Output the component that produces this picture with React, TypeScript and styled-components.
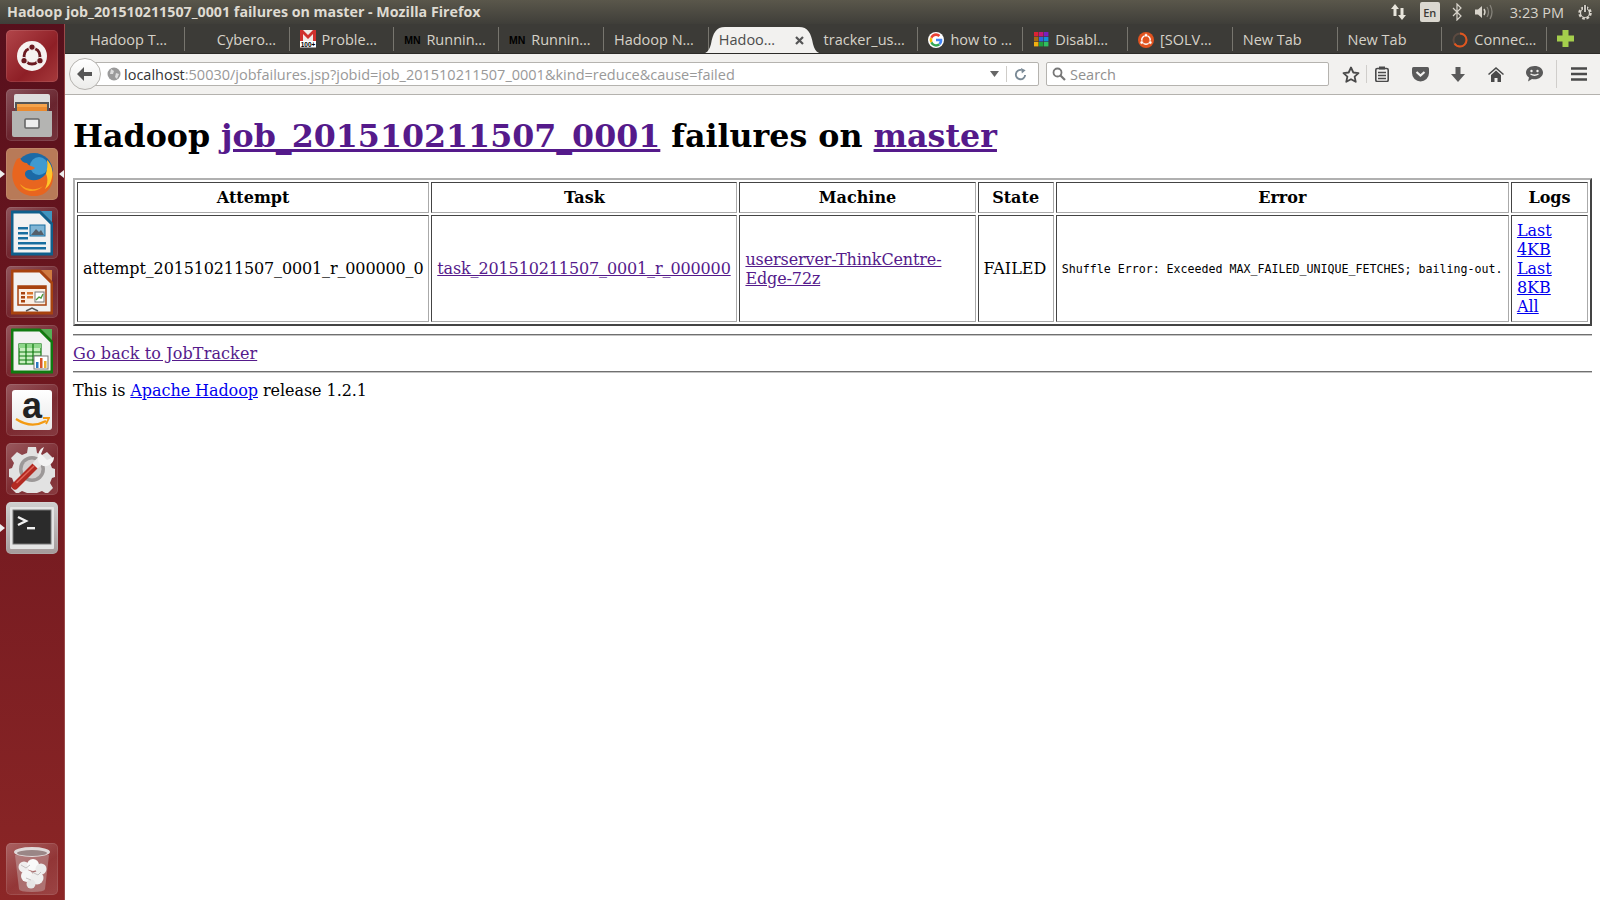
import React from 'react'
import styled, { createGlobalStyle } from 'styled-components'

const GlobalStyle = createGlobalStyle`
  html, body { margin: 0; padding: 0; height: 100%; overflow: hidden; background: #fff; }
  #root { height: 100%; }
`

const Desktop = styled.div`
  width: 1600px;
  height: 900px;
  display: flex;
  flex-direction: column;
  overflow: hidden;
  font-family: "Open Sans", "Noto Sans", sans-serif;
`

const PanelBar = styled.div`
  height: 24px;
  flex: none;
  box-sizing: border-box;
  display: flex;
  align-items: center;
  justify-content: space-between;
  padding: 0 6px 0 7px;
  background: linear-gradient(#5a574b, #3f3e39);
  color: #dfdbd2;
`

const WindowTitle = styled.div`
  font-size: 14.25px;
  font-weight: 700;
  white-space: nowrap;
  padding-bottom: 2px;
`

const Indicators = styled.div`
  display: flex;
  align-items: center;
  gap: 12px;
`

const LangBadge = styled.div`
  width: 20px;
  height: 20px;
  border-radius: 2px;
  background: #dbd8d0;
  color: #3c3b37;
  font-size: 11px;
  font-weight: 600;
  display: flex;
  align-items: center;
  justify-content: center;
`

const Clock = styled.div`
  font-size: 14.5px;
  color: #d8d4cb;
  margin-left: 4px;
`

const Body = styled.div`
  flex: 1;
  display: flex;
  min-height: 0;
`

const Launcher = styled.nav`
  width: 65px;
  flex: none;
  box-sizing: border-box;
  padding: 6px 6px 5px;
  display: flex;
  flex-direction: column;
  justify-content: space-between;
  background: linear-gradient(#57101c, #6e171f 40%, #8b2626);
  border-right: 1px solid #9a4a4a;
  position: relative;
`

const LauncherGroup = styled.div`
  display: flex;
  flex-direction: column;
  gap: 7px;
`

const Tile = styled.div<{ $bg?: string }>`
  width: 52px;
  height: 52px;
  border-radius: 5px;
  position: relative;
  background: ${p => p.$bg || 'linear-gradient(145deg, rgba(255,255,255,.28), rgba(255,255,255,.08) 55%, rgba(255,255,255,.14))'};
  box-shadow: inset 0 0 0 1px rgba(255,255,255,.1);
  display: flex;
  align-items: center;
  justify-content: center;
`

const Pip = styled.div<{ $side: 'left' | 'right' }>`
  position: absolute;
  top: 50%;
  margin-top: -4px;
  width: 0;
  height: 0;
  border-top: 4px solid transparent;
  border-bottom: 4px solid transparent;
  ${p => p.$side === 'left'
    ? 'left: -6px; border-left: 5px solid #eee;'
    : 'right: -6px; border-right: 5px solid #eee;'}
`

const AmazonCard = styled.div`
  width: 40px;
  height: 40px;
  border-radius: 3px;
  background: linear-gradient(#fff, #e8e8e8);
  position: relative;
  text-align: center;
  font-family: "Liberation Sans", sans-serif;
  font-size: 36px;
  font-weight: 700;
  line-height: 31px;
  color: #222;
`

const AmazonSmile = styled.svg`
  position: absolute;
  left: 2px;
  bottom: 2px;
`

const Browser = styled.div`
  flex: 1;
  min-width: 0;
  display: flex;
  flex-direction: column;
`

const TabStrip = styled.div`
  height: 30px;
  flex: none;
  display: flex;
  align-items: center;
  padding-left: 15px;
  background: #3c3b37;
  border-bottom: 1px solid #2c2b28;
  box-sizing: border-box;
  overflow: hidden;
`

const Tab = styled.div<{ $active?: boolean }>`
  width: 104.8px;
  height: 24px;
  flex: none;
  box-sizing: border-box;
  padding: 2px 0 0 10px;
  display: flex;
  align-items: center;
  gap: 6px;
  position: relative;
  font-size: 14.5px;
  white-space: nowrap;
  color: ${p => (p.$active ? '#4c4c4c' : '#d6d2c8')};
  border-right: 1px solid ${p => (p.$active ? 'transparent' : '#77756e')};
`

const TabLabel = styled.span`
  position: relative;
  z-index: 1;
`

const TabIcon = styled.span`
  width: 16px;
  height: 16px;
  flex: none;
  display: flex;
  align-items: center;
  justify-content: center;
  position: relative;
  z-index: 1;
`

const MnIcon = styled(TabIcon)`
  font-family: "Liberation Sans", sans-serif;
  font-size: 10.5px;
  font-weight: 700;
  color: #000;
`

const ActiveShape = styled.svg`
  position: absolute;
  left: -10px;
  bottom: -3px;
`

const TabClose = styled.svg`
  position: absolute;
  right: 9px;
  top: 9px;
  z-index: 1;
`

const AddTab = styled.svg`
  margin-left: 10px;
`

const NavBar = styled.div`
  height: 41px;
  flex: none;
  box-sizing: border-box;
  display: flex;
  align-items: center;
  padding: 0 6px 0 4px;
  background: #f2f1ef;
  border-bottom: 1px solid #b4b2ae;
`

const BackButton = styled.div`
  width: 32px;
  height: 32px;
  flex: none;
  box-sizing: border-box;
  border-radius: 50%;
  border: 1px solid #b5b3af;
  background: linear-gradient(#fff, #ececea);
  display: flex;
  align-items: center;
  justify-content: center;
  position: relative;
  z-index: 1;
`

const UrlBar = styled.div`
  width: 954px;
  height: 24px;
  flex: none;
  margin-left: -16px;
  padding-left: 21px;
  box-sizing: border-box;
  display: flex;
  align-items: center;
  background: #fff;
  border: 1px solid #b5b3af;
  border-radius: 0 2px 2px 0;
  font-size: 14.5px;
  color: #999;
`

const UrlHost = styled.span`
  color: #333;
`

const UrlText = styled.div`
  flex: 1;
  margin-left: 3px;
  white-space: nowrap;
`

const UrlActions = styled.div`
  width: 48px;
  height: 100%;
  display: flex;
  align-items: center;
  justify-content: space-between;
  padding-right: 11px;
  box-sizing: border-box;
`

const UrlDivider = styled.div`
  width: 1px;
  height: 16px;
  background: #cfcdc9;
`

const SearchBox = styled.div`
  width: 283px;
  height: 24px;
  flex: none;
  margin-left: 7px;
  padding-left: 5px;
  gap: 4px;
  box-sizing: border-box;
  display: flex;
  align-items: center;
  background: #fff;
  border: 1px solid #b5b3af;
  border-radius: 2px;
  font-size: 14.5px;
  color: #8f8f8f;
`

const ToolButtons = styled.div`
  flex: 1;
  display: flex;
  align-items: center;
  padding-left: 13px;
`

const ToolButton = styled.div<{ $w: number }>`
  width: ${p => p.$w}px;
  display: flex;
  align-items: center;
  justify-content: center;
`

const ToolDivider = styled.div<{ $h: number; $mx: number }>`
  width: 1px;
  height: ${p => p.$h}px;
  margin: 0 ${p => p.$mx}px;
  background: #d0cecb;
`

const Page = styled.main`
  flex: 1;
  background: #fff;
  padding: 0 8px;
  font-family: "DejaVu Serif", serif;
  font-size: 16px;
  color: #000;
  a { color: #0000ee; }
  a.visited { color: #551a8b; }
`

const Heading = styled.h1`
  font-size: 31.7px;
  line-height: 37px;
  margin: 22px 0 24px;
  font-weight: 700;
  white-space: nowrap;
`

const FailureTable = styled.table`
  width: 100%;
  table-layout: fixed;
  border-collapse: separate;
  border-spacing: 2px;
  border-style: solid;
  border-width: 2px;
  border-color: #b0b0b0 #444 #444 #b0b0b0;
`

const HeadCell = styled.th<{ $w: number }>`
  width: ${p => p.$w}px;
  box-sizing: border-box;
  padding: 5px;
  border-style: solid;
  border-width: 1px;
  border-color: #444 #aaa #aaa #444;
  font-weight: 700;
  text-align: center;
`

const DataCell = styled.td<{ $spacing?: number }>`
  box-sizing: border-box;
  padding: 5px;
  border-style: solid;
  border-width: 1px;
  border-color: #444 #aaa #aaa #444;
  letter-spacing: ${p => p.$spacing || 0}px;
`

const ErrorText = styled.pre`
  margin: 0;
  font-family: "DejaVu Sans Mono", monospace;
  font-size: 11.63px;
`

const Rule = styled.hr`
  margin: 8px 0;
  height: 0;
  border: none;
  border-top: 1px solid #707070;
  border-bottom: 1px solid #c4c4c4;
`

const BackLink = styled.a`
  letter-spacing: 0.1px;
`

const ReleaseLine = styled.div`
  letter-spacing: -0.06px;
`

const UbuntuMark = ({ size, ring, dot }: { size: number; ring: string; dot: string }) => (
  <svg width={size} height={size} viewBox="0 0 32 32">
    <circle cx="16" cy="16" r="16" fill={dot} />
    <circle cx="16" cy="16" r="8.5" fill="none" stroke={ring} strokeWidth="3" />
    <circle cx="16" cy="6.5" r="3.4" fill={ring} stroke={dot} strokeWidth="1.2" />
    <circle cx="7.5" cy="21" r="3.4" fill={ring} stroke={dot} strokeWidth="1.2" />
    <circle cx="24.5" cy="21" r="3.4" fill={ring} stroke={dot} strokeWidth="1.2" />
  </svg>
)

const DocIcon = ({ edge, fold, children }: { edge: string; fold: string; children: React.ReactNode }) => (
  <svg width="42" height="46" viewBox="0 0 42 46">
    <path d="M1 2h28l12 12v30H1z" fill="#f2f2f2" stroke={edge} strokeWidth="3" strokeLinejoin="round" />
    <path d="M30 1l11 0 0 11z" fill={fold} />
    {children}
  </svg>
)

const FilesIcon = () => (
  <svg width="42" height="44" viewBox="0 0 42 44">
    <path d="M3 3q0-2 2-2h32q2 0 2 2v12H3z" fill="#ddd" />
    <rect x="4" y="9" width="34" height="9" fill="#555" />
    <rect x="6" y="11" width="30" height="3" fill="#f5a34a" />
    <rect x="6" y="14" width="30" height="4" fill="#e98a2f" />
    <path d="M1 18h40v24q0 2-2 2H3q-2 0-2-2z" fill="#b4b4b2" />
    <rect x="14" y="26" width="14" height="9" rx="1" fill="#eee" stroke="#666" strokeWidth="1.6" />
  </svg>
)

const FirefoxIcon = () => (
  <svg width="48" height="48" viewBox="0 0 48 48">
    <circle cx="26" cy="22" r="19" fill="#1c6aa6" />
    <circle cx="31" cy="16" r="9" fill="#3f9ad0" />
    <path d="M9 9c-5 8-7 19-1 28 6 9 20 12 29 6 7-5 10-14 7-24-1-4-3-7-5-9 2 6 1 12-3 16-5 5-14 6-18 1-2-3-1-6 2-7 3 0 5 0 7-2-2-2-7-2-8-5-3 0-6-2-7-5-2 0-2 1-3 1z" fill="#e8651f" />
    <path d="M39 10c5 5 7 13 4 21-1 3-3 6-6 8 3-6 3-11 1-15 1-5 2-9 1-14z" fill="#ffc52a" />
    <path d="M12 34c6 6 16 7 23 2-6 7-19 7-23-2z" fill="#f7a11e" />
  </svg>
)

const WriterIcon = () => (
  <DocIcon edge="#0f5f8c" fold="#3f94bf">
    <rect x="7" y="17" width="10" height="2.5" fill="#186ea0" />
    <rect x="7" y="22" width="10" height="2.5" fill="#186ea0" />
    <rect x="7" y="27" width="10" height="2.5" fill="#186ea0" />
    <rect x="7" y="32" width="28" height="2.5" fill="#186ea0" />
    <rect x="7" y="37" width="28" height="2.5" fill="#186ea0" />
    <rect x="19" y="15" width="15" height="11" fill="#7fb5d5" stroke="#186ea0" />
    <path d="M20 25l5-6 3 3 2-2 3 5z" fill="#55606a" />
  </DocIcon>
)

const ImpressIcon = () => (
  <DocIcon edge="#a8430f" fold="#cf7a3f">
    <rect x="7" y="17" width="28" height="19" fill="#fbeee2" stroke="#a8430f" strokeWidth="1.5" />
    <rect x="7" y="17" width="28" height="3" fill="#a8430f" />
    <rect x="10" y="23" width="4" height="2.5" fill="#a8430f" />
    <rect x="10" y="27" width="4" height="2.5" fill="#a8430f" />
    <rect x="10" y="31" width="4" height="2.5" fill="#a8430f" />
    <rect x="16" y="23" width="6" height="2.5" fill="#d8742f" />
    <rect x="16" y="27" width="6" height="2.5" fill="#d8742f" />
    <rect x="24" y="23" width="9" height="10" fill="#fff" stroke="#777" />
    <path d="M25 31l3-3 2 1 2-4" fill="none" stroke="#4a9a3a" strokeWidth="1.4" />
    <path d="M15 42l6-3 6 3" fill="none" stroke="#555" strokeWidth="1.5" />
  </DocIcon>
)

const CalcIcon = () => (
  <DocIcon edge="#107a10" fold="#55b055">
    <rect x="8" y="16" width="22" height="20" fill="#c8eec0" stroke="#107a10" strokeWidth="1.2" />
    <rect x="8" y="16" width="22" height="4" fill="#8ed68a" />
    <path d="M8 24h22M8 28h22M8 32h22M15 16v20M22 16v20" stroke="#107a10" strokeWidth="1.2" />
    <rect x="23" y="28" width="14" height="13" fill="#fff" stroke="#777" />
    <rect x="25" y="34" width="2.5" height="6" fill="#2a78c0" />
    <rect x="29" y="30" width="2.5" height="10" fill="#d8542a" />
    <rect x="33" y="33" width="2.5" height="7" fill="#e8b030" />
  </DocIcon>
)

const SettingsIcon = () => (
  <svg width="48" height="48" viewBox="0 0 48 48">
    <path d="M20 2h8l1 6 5 2 5-3 6 6-3 5 2 5 3 1v8l-3 1-2 5 3 5-6 6-5-3-5 2-1 4h-8l-1-4-5-2-5 3-6-6 3-5-2-5-3-1v-8l3-1 2-5-3-5 6-6 5 3 5-2z" fill="#e2e2e2" />
    <circle cx="24" cy="24" r="13" fill="#9c9898" />
    <circle cx="24" cy="24" r="9.500" fill="#d2cece" />
    <path d="M7 41L28 20" stroke="#b32a22" strokeWidth="7" strokeLinecap="round" />
    <path d="M8.500 38L26 21" stroke="#e0655a" strokeWidth="1.500" />
    <path d="M27 21L33 15" stroke="#e8e8e8" strokeWidth="8" />
    <path d="M36 2l-3 7 6 6 7-3c0 6-5 10-11 9l-4-3c-3-7 0-14 5-16z" fill="#f2f2f2" />
  </svg>
)

const TerminalIcon = () => (
  <svg width="44" height="42" viewBox="0 0 44 42">
    <rect x="0" y="0" width="44" height="42" rx="1" fill="#e4e4e4" />
    <rect x="3" y="3" width="38" height="34" fill="#2b2b2b" stroke="#777" />
    <path d="M8 10l8 4-8 4" fill="none" stroke="#f2f2f2" strokeWidth="2.400" />
    <rect x="17" y="20" width="8" height="2.400" fill="#f2f2f2" />
  </svg>
)

const TrashIcon = () => (
  <svg width="40" height="48" viewBox="0 0 40 48">
    <path d="M3 10l4 34q0 3 13 3t13-3l4-34z" fill="#c9b4b4" fillOpacity=".45" />
    <ellipse cx="20" cy="7" rx="18" ry="5" fill="#e0dada" />
    <ellipse cx="20" cy="8" rx="15" ry="3" fill="#9a8686" />
    <circle cx="12" cy="22" r="5.500" fill="#f0eeee" />
    <circle cx="21" cy="20" r="6" fill="#fafafa" />
    <circle cx="29" cy="24" r="5.500" fill="#ececec" />
    <circle cx="15" cy="31" r="6" fill="#f5f5f5" />
    <circle cx="25" cy="33" r="6.500" fill="#efefef" />
    <circle cx="19" cy="39" r="4.500" fill="#e6e6e6" />
    <path d="M9 20l5 3 4-3M20 27l6 3 3-3M14 33l5 2" fill="none" stroke="#c4c0c0" strokeWidth="1" />
  </svg>
)

const GmailIcon = () => (
  <svg width="16" height="19" viewBox="0 0 16 19">
    <rect x="0" y="0" width="16" height="11" fill="#f0ece8" />
    <path d="M0 0h3l5 5 5-5h3v11h-3V4L8 9 3 4v7H0z" fill="#d0312d" />
    <rect x="0" y="11" width="16" height="6.500" fill="#fff" />
    <text x="8" y="16.500" textAnchor="middle" fontFamily="Liberation Sans, sans-serif" fontSize="6.500" fontWeight="700" fill="#000">100+</text>
  </svg>
)

const GoogleIcon = () => (
  <svg width="16" height="16" viewBox="0 0 48 48">
    <circle cx="24" cy="24" r="24" fill="#fff" />
    <path d="M43 24.500c0-1.400-.1-2.700-.4-4H24v7.600h10.800c-.5 2.500-1.900 4.600-4 6l6.200 4.800c3.700-3.400 6-8.400 6-14.400z" fill="#4285f4" />
    <path d="M24 44c5.200 0 9.500-1.700 12.700-4.700l-6.200-4.800c-1.700 1.200-3.900 1.900-6.500 1.900-5 0-9.300-3.400-10.800-8L7 33.200C10.200 39.600 16.600 44 24 44z" fill="#34a853" />
    <path d="M13.200 28.400c-.8-2.400-.8-5.400 0-7.800L7 15.800c-2.700 5.300-2.700 11.100 0 16.400z" fill="#fbbc05" />
    <path d="M24 12c2.800 0 5.300 1 7.300 2.900l5.500-5.500C33.500 6.200 29.200 4 24 4 16.600 4 10.200 8.400 7 14.800l6.200 4.800C14.700 15.400 19 12 24 12z" fill="#ea4335" />
  </svg>
)

const GridIcon = () => {
  const colours = ['#d23', '#c2187b', '#7a1fc0', '#a86a10', '#2a6ae0', '#1090d8', '#f0b010', '#20a040', '#30c060']
  return (
    <svg width="15" height="15" viewBox="0 0 15 15">
      {colours.map((c, i) => (
        <rect key={c} x={(i % 3) * 5} y={Math.floor(i / 3) * 5} width="4.400" height="4.400" fill={c} />
      ))}
    </svg>
  )
}

const SpinnerIcon = () => (
  <svg width="16" height="16" viewBox="0 0 16 16">
    <circle cx="8" cy="8" r="6.500" fill="none" stroke="#5c4a40" strokeWidth="2" />
    <path d="M8 1.500A6.500 6.500 0 0 1 8 14.500A6.500 6.500 0 0 1 2.500 11.500" fill="none" stroke="#e0561f" strokeWidth="2" />
  </svg>
)

const tabs: { label: string; icon?: React.ReactNode; blank?: boolean }[] = [
  { label: 'Hadoop T…' },
  { label: 'Cybero…', blank: true },
  { label: 'Proble…', icon: <GmailIcon /> },
  { label: 'Runnin…', icon: <MnIcon>MN</MnIcon> },
  { label: 'Runnin…', icon: <MnIcon>MN</MnIcon> },
  { label: 'Hadoop N…' },
]

const tabsAfter: { label: string; icon?: React.ReactNode }[] = [
  { label: 'tracker_us…' },
  { label: 'how to …', icon: <GoogleIcon /> },
  { label: 'Disabl…', icon: <GridIcon /> },
  { label: '[SOLV…', icon: <UbuntuMark size={16} ring="#fff" dot="#e2531f" /> },
  { label: 'New Tab' },
  { label: 'New Tab' },
  { label: 'Connec…', icon: <SpinnerIcon /> },
]

export default function App() {
  return (
    <Desktop>
      <GlobalStyle />
      <PanelBar>
        <WindowTitle>Hadoop job_201510211507_0001 failures on master - Mozilla Firefox</WindowTitle>
        <Indicators>
          <svg width="18" height="18" viewBox="0 0 18 18">
            <path d="M5 1l4 5H6.500v7h-3V6H1z" fill="#e8e5dc" />
            <path d="M12 17l-4-5h2.500V5h3v7H16z" fill="#e8e5dc" />
          </svg>
          <LangBadge>En</LangBadge>
          <svg width="10" height="18" viewBox="0 0 10 18">
            <path d="M1 5l8 8-4 4V1l4 4-8 8" fill="none" stroke="#d8d4cb" strokeWidth="1.200" />
          </svg>
          <svg width="20" height="18" viewBox="0 0 20 18">
            <path d="M1 6.500h3l4-3.500v12l-4-3.500H1z" fill="#d8d4cb" />
            <path d="M10 6q2 3 0 6" fill="none" stroke="#d8d4cb" strokeWidth="1.400" />
            <path d="M13 4q3 5 0 10M16 2q4 7 0 14" fill="none" stroke="#85827a" strokeWidth="1.300" />
          </svg>
          <Clock>3:23 PM</Clock>
          <svg width="18" height="18" viewBox="0 0 18 18">
            <circle cx="9" cy="10" r="5.500" fill="none" stroke="#d8d4cb" strokeWidth="2.500" strokeDasharray="2.600 1.700" />
            <circle cx="9" cy="10" r="4.500" fill="none" stroke="#d8d4cb" strokeWidth="1.200" />
            <path d="M9 2v7" stroke="#3f3e39" strokeWidth="4" />
            <path d="M9 2v7" stroke="#d8d4cb" strokeWidth="1.800" />
          </svg>
        </Indicators>
      </PanelBar>
      <Body>
        <Launcher>
          <LauncherGroup>
            <Tile $bg="linear-gradient(135deg, #b2464a, #8e1f26 60%, #a63a3c)">
              <UbuntuMark size={30} ring="#6b1a20" dot="#f6f2f0" />
            </Tile>
            <Tile><FilesIcon /></Tile>
            <Tile $bg="#b87a58">
              <FirefoxIcon />
              <Pip $side="left" />
              <Pip $side="right" />
            </Tile>
            <Tile><WriterIcon /></Tile>
            <Tile><ImpressIcon /></Tile>
            <Tile><CalcIcon /></Tile>
            <Tile>
              <AmazonCard>
                a
                <AmazonSmile width="36" height="12" viewBox="0 0 36 12">
                  <path d="M2 3q15 10 30 2" fill="none" stroke="#f39a12" strokeWidth="2.200" />
                  <path d="M29 2l6 0-3 6" fill="none" stroke="#f39a12" strokeWidth="1.800" />
                </AmazonSmile>
              </AmazonCard>
            </Tile>
            <Tile><SettingsIcon /></Tile>
            <Tile $bg="linear-gradient(#cfcfcf, #a49a9a)">
              <TerminalIcon />
              <Pip $side="left" />
            </Tile>
          </LauncherGroup>
          <Tile><TrashIcon /></Tile>
        </Launcher>
        <Browser>
          <TabStrip>
            {tabs.map((t, i) => (
              <Tab key={i}>
                {(t.icon || t.blank) && <TabIcon>{t.icon}</TabIcon>}
                <TabLabel>{t.label}</TabLabel>
              </Tab>
            ))}
            <Tab $active>
              <ActiveShape width="127" height="28" viewBox="0 0 127 28">
                <path d="M0 28c8 0 10-3 12-10 2-11 5-17 14-17h74c9 0 12 6 14 17 2 7 4 10 13 10z" fill="#f2f1ef" />
              </ActiveShape>
              <TabLabel>Hadoo…</TabLabel>
              <TabClose width="9" height="9" viewBox="0 0 9 9">
                <path d="M1 1l7 7M8 1l-7 7" stroke="#555" strokeWidth="2.200" />
              </TabClose>
            </Tab>
            {tabsAfter.map((t, i) => (
              <Tab key={i}>
                {t.icon && <TabIcon>{t.icon}</TabIcon>}
                <TabLabel>{t.label}</TabLabel>
              </Tab>
            ))}
            <AddTab width="17" height="17" viewBox="0 0 17 17">
              <path d="M5.500 0h6v5.500H17v6h-5.500V17h-6v-5.500H0v-6h5.500z" fill="#a5cf4c" />
            </AddTab>
          </TabStrip>
          <NavBar>
            <BackButton>
              <svg width="16" height="14" viewBox="0 0 16 14">
                <path d="M7 0L0 7l7 7V9h8V5H7z" fill="#555" />
              </svg>
            </BackButton>
            <UrlBar>
              <svg width="14" height="14" viewBox="0 0 14 14">
                <circle cx="7" cy="7" r="6.500" fill="#9a9a9a" />
                <path d="M4 2l3 2-1 3-3 0zM9 6l3 1-2 5-2-2z" fill="#dcdcdc" />
              </svg>
              <UrlText>
                <UrlHost>localhost</UrlHost>:50030/jobfailures.jsp?jobid=job_201510211507_0001&amp;kind=reduce&amp;cause=failed
              </UrlText>
              <UrlActions>
                <svg width="9" height="6" viewBox="0 0 9 6">
                  <path d="M0 0h9L4.500 6z" fill="#666" />
                </svg>
                <UrlDivider />
                <svg width="13" height="13" viewBox="0 0 14 14">
                  <path d="M12 7.500A5 5 0 1 1 8 2.200" fill="none" stroke="#7a8a96" strokeWidth="2" />
                  <path d="M7.500 0l5 2.500-4 3.500z" fill="#7a8a96" />
                </svg>
              </UrlActions>
            </UrlBar>
            <SearchBox>
              <svg width="14" height="14" viewBox="0 0 14 14">
                <circle cx="5.500" cy="5.500" r="4" fill="none" stroke="#777" strokeWidth="1.800" />
                <path d="M8.500 8.500l4.500 4.500" stroke="#777" strokeWidth="2.200" />
              </svg>
              Search
            </SearchBox>
            <ToolButtons>
              <ToolButton $w={18}>
                <svg width="18" height="17" viewBox="0 0 18 17">
                  <path d="M9 1.500l2.300 5 5.200.6-3.900 3.500 1.100 5.200L9 13.200l-4.700 2.600 1.100-5.200L1.500 7.100l5.200-.6z" fill="none" stroke="#4a4a4a" strokeWidth="1.800" strokeLinejoin="round" />
                </svg>
              </ToolButton>
              <ToolDivider $h={18} $mx={6} />
              <ToolButton $w={18}>
                <svg width="14" height="16" viewBox="0 0 14 16">
                  <rect x="0.800" y="2.500" width="12.400" height="13" rx="1.500" fill="none" stroke="#4a4a4a" strokeWidth="1.600" />
                  <rect x="4" y="0.500" width="6" height="3" fill="#4a4a4a" />
                  <path d="M3 6.500h8M3 9.500h8M3 12.500h8" stroke="#4a4a4a" strokeWidth="1.600" />
                </svg>
              </ToolButton>
              <ToolButton $w={58}>
                <svg width="17" height="15" viewBox="0 0 17 15">
                  <path d="M1.500 0h14q1.500 0 1.500 1.500V6a8.500 8.500 0 0 1-17 0V1.500Q0 0 1.500 0z" fill="#5a5a5a" />
                  <path d="M4.500 5l4 3.500 4-3.500" fill="none" stroke="#f2f1ef" strokeWidth="2.200" />
                </svg>
              </ToolButton>
              <ToolButton $w={18}>
                <svg width="14" height="15" viewBox="0 0 14 15">
                  <path d="M4.500 0h5v7H14l-7 8-7-8h4.500z" fill="#5a5a5a" />
                </svg>
              </ToolButton>
              <ToolButton $w={58}>
                <svg width="16" height="15" viewBox="0 0 16 15">
                  <path d="M8 0L0 7l1 1 7-6 7 6 1-1z" fill="#4a4a4a" />
                  <path d="M3 8l5-4.500L13 8v7H9.500v-4h-3v4H3z" fill="#4a4a4a" />
                </svg>
              </ToolButton>
              <ToolButton $w={18}>
                <svg width="17" height="16" viewBox="0 0 17 16">
                  <path d="M8.500 0C3.800 0 0 2.900 0 6.500c0 2 1.200 3.800 3 5l-1 4 4-2.500c.8.200 1.600.300 2.500.300 4.700 0 8.500-3 8.500-6.800S13.200 0 8.500 0z" fill="#5a5a5a" />
                  <circle cx="5.500" cy="5" r="1.200" fill="#f2f1ef" />
                  <circle cx="11.500" cy="5" r="1.200" fill="#f2f1ef" />
                  <path d="M4.500 8q4 2.500 8 0" fill="none" stroke="#f2f1ef" strokeWidth="1.300" />
                </svg>
              </ToolButton>
              <ToolDivider $h={28} $mx={13} />
              <ToolButton $w={17}>
                <svg width="16" height="14" viewBox="0 0 16 14">
                  <path d="M0 1.500h16M0 7h16M0 12.500h16" stroke="#4a4a4a" strokeWidth="2.400" />
                </svg>
              </ToolButton>
            </ToolButtons>
          </NavBar>
          <Page>
            <Heading>
              Hadoop <a className="visited" href="#job">job_201510211507_0001</a> failures on <a className="visited" href="#master">master</a>
            </Heading>
            <FailureTable>
              <thead>
                <tr>
                  <HeadCell $w={352}>Attempt</HeadCell>
                  <HeadCell $w={306}>Task</HeadCell>
                  <HeadCell $w={236}>Machine</HeadCell>
                  <HeadCell $w={76}>State</HeadCell>
                  <HeadCell $w={453}>Error</HeadCell>
                  <HeadCell $w={77}>Logs</HeadCell>
                </tr>
              </thead>
              <tbody>
                <tr>
                  <DataCell $spacing={-0.14}>attempt_201510211507_0001_r_000000_0</DataCell>
                  <DataCell $spacing={-0.13}><a className="visited" href="#task">task_201510211507_0001_r_000000</a></DataCell>
                  <DataCell $spacing={-0.13}><a className="visited" href="#machine">userserver-ThinkCentre-Edge-72z</a></DataCell>
                  <DataCell>FAILED</DataCell>
                  <DataCell><ErrorText>Shuffle Error: Exceeded MAX_FAILED_UNIQUE_FETCHES; bailing-out.</ErrorText></DataCell>
                  <DataCell>
                    <a href="#4kb">Last 4KB</a><br />
                    <a href="#8kb">Last 8KB</a><br />
                    <a href="#all">All</a>
                  </DataCell>
                </tr>
              </tbody>
            </FailureTable>
            <Rule />
            <BackLink className="visited" href="#jobtracker">Go back to JobTracker</BackLink>
            <Rule />
            <ReleaseLine>This is <a href="#hadoop">Apache Hadoop</a> release 1.2.1</ReleaseLine>
          </Page>
        </Browser>
      </Body>
    </Desktop>
  )
}
